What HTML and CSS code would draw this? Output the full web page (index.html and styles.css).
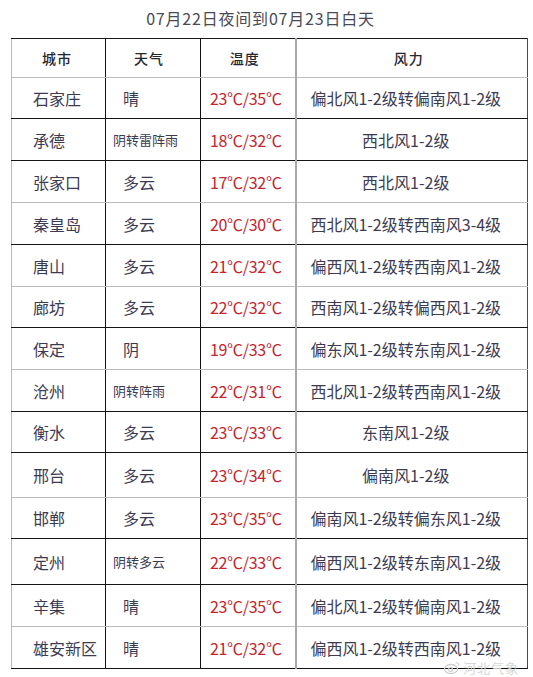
FILE: index.html
```html
<!DOCTYPE html>
<html lang="zh-CN">
<head>
<meta charset="utf-8">
<title>07月22日夜间到07月23日白天</title>
<link rel="stylesheet" href="styles.css">
</head>
<body>
<div class="page">
  <h1 class="title">07月22日夜间到07月23日白天</h1>
  <table class="wx">
    <colgroup>
      <col class="c-city"><col class="c-wx"><col class="c-temp"><col class="c-wind">
    </colgroup>
    <thead>
      <tr class="head">
        <th>城市</th><th>天气</th><th>温度</th><th>风力</th>
      </tr>
    </thead>
    <tbody>
      <tr class="r41 line-k"><td class="city">石家庄</td><td class="wx1">晴</td><td class="temp">23℃/35℃</td><td class="wind">偏北风1-2级转偏南风1-2级</td></tr>
      <tr class="line-k"><td class="city">承德</td><td class="wx2">阴转雷阵雨</td><td class="temp">18℃/32℃</td><td class="wind">西北风1-2级</td></tr>
      <tr class="line-g"><td class="city">张家口</td><td class="wx1">多云</td><td class="temp">17℃/32℃</td><td class="wind">西北风1-2级</td></tr>
      <tr class="line-k"><td class="city">秦皇岛</td><td class="wx1">多云</td><td class="temp">20℃/30℃</td><td class="wind">西北风1-2级转西南风3-4级</td></tr>
      <tr class="line-g"><td class="city">唐山</td><td class="wx1">多云</td><td class="temp">21℃/32℃</td><td class="wind">偏西风1-2级转西南风1-2级</td></tr>
      <tr class="r41 line-k"><td class="city">廊坊</td><td class="wx1">多云</td><td class="temp">22℃/32℃</td><td class="wind">西南风1-2级转偏西风1-2级</td></tr>
      <tr class="line-g"><td class="city">保定</td><td class="wx1">阴</td><td class="temp">19℃/33℃</td><td class="wind">偏东风1-2级转东南风1-2级</td></tr>
      <tr class="line-k"><td class="city">沧州</td><td class="wx2">阴转阵雨</td><td class="temp">22℃/31℃</td><td class="wind">西北风1-2级转西南风1-2级</td></tr>
      <tr class="r41 line-k"><td class="city">衡水</td><td class="wx1">多云</td><td class="temp">23℃/33℃</td><td class="wind">东南风1-2级</td></tr>
      <tr class="r45 line-g"><td class="city">邢台</td><td class="wx1">多云</td><td class="temp">23℃/34℃</td><td class="wind">偏南风1-2级</td></tr>
      <tr class="r41 line-k"><td class="city">邯郸</td><td class="wx1">多云</td><td class="temp">23℃/35℃</td><td class="wind">偏南风1-2级转偏东风1-2级</td></tr>
      <tr class="r46 line-k"><td class="city">定州</td><td class="wx2">阴转多云</td><td class="temp">22℃/33℃</td><td class="wind">偏西风1-2级转东南风1-2级</td></tr>
      <tr class="line-g"><td class="city">辛集</td><td class="wx1">晴</td><td class="temp">23℃/35℃</td><td class="wind">偏北风1-2级转偏南风1-2级</td></tr>
      <tr class="line-k"><td class="city">雄安新区</td><td class="wx1">晴</td><td class="temp">21℃/32℃</td><td class="wind">偏西风1-2级转西南风1-2级</td></tr>
    </tbody>
  </table>
  <div class="mark">
    <svg class="mark-logo" width="16" height="13" viewBox="0 0 16 13" aria-hidden="true">
      <ellipse cx="7" cy="8" rx="6.5" ry="4.5" fill="none" stroke="#cfcfcf" stroke-width="1.3"/>
      <circle cx="6.5" cy="8.5" r="2" fill="none" stroke="#cfcfcf" stroke-width="1.2"/>
      <path d="M11.5 1.5 A3.5 3.5 0 0 1 15 5" fill="none" stroke="#d6d6d6" stroke-width="1.2"/>
    </svg>
    <span class="mark-text">河北气象</span>
  </div>
</div>
</body>
</html>
```

FILE: styles.css
```css
html, body {
  margin: 0;
  padding: 0;
  background: #ffffff;
}

.page {
  position: relative;
  width: 533px;
  height: 677px;
  overflow: hidden;
  font-family: "Noto Sans CJK SC", "Noto Sans", sans-serif;
  color: #3d3b52;
}

.title {
  margin: 0;
  height: 38px;
  display: flex;
  align-items: center;
  justify-content: center;
  padding-right: 12px;
  padding-bottom: 2px;
  box-sizing: border-box;
  font-size: 16px;
  font-weight: normal;
  letter-spacing: 0.8px;
  color: #4a4a56;
}

.wx {
  margin-left: 11px;
  width: 517px;
  border-collapse: collapse;
  table-layout: fixed;
  border-top: 1px solid #1a1a1a;
  border-left: 1px solid #b9b9b9;
  border-right: 1px solid #4a4a4a;
}

.c-city { width: 94px; }
.c-wx { width: 95px; }
.c-temp { width: 95px; }
.c-wind { width: 232px; }

.wx th,
.wx td {
  padding: 0;
  border-right: 1px solid #111111;
  vertical-align: middle;
  white-space: nowrap;
}

.wx th:nth-child(3),
.wx td:nth-child(3) {
  border-right: 2px solid #a8a8a8;
}

.wx th:last-child,
.wx td:last-child {
  border-right: 1px solid #4a4a4a;
}

.head {
  height: 39px;
}

.head th {
  border-bottom: 1px solid #bdbdbd;
  font-size: 14px;
  font-weight: 500;
  letter-spacing: 1px;
  color: #26262e;
  text-align: center;
}

.head th:first-child {
  padding-right: 3px;
}

.head th:nth-child(2) {
  padding-right: 8px;
}

.head th:nth-child(3) {
  padding-right: 6px;
}

.head th:last-child {
  padding-right: 6px;
}

.wx tbody tr {
  height: 42px;
}

.wx tbody tr.r41 { height: 41px; }
.wx tbody tr.r45 { height: 45px; }
.wx tbody tr.r46 { height: 46px; }

.line-k td { border-bottom: 1px solid #141414; }
.line-g td { border-bottom: 1px solid #bcbcbc; }

.city {
  font-size: 16px;
  padding-left: 21px !important;
  text-align: left;
}

.wx1 {
  font-size: 16px;
  padding-left: 17px !important;
  text-align: left;
}

.wx2 {
  font-size: 13px;
  padding-left: 7px !important;
  text-align: left;
}

.temp {
  font-size: 16px;
  text-align: center;
  color: #c4242b;
  letter-spacing: -0.3px;
  padding-right: 4px !important;
}

.wind {
  font-size: 16px;
  text-align: center;
  padding-right: 12px !important;
}

.mark {
  position: absolute;
  left: 444px;
  top: 660px;
  display: flex;
  align-items: center;
  gap: 3px;
}

.mark-text {
  font-size: 13px;
  line-height: 15px;
  color: #d6d6d6;
  letter-spacing: 1px;
}
```
